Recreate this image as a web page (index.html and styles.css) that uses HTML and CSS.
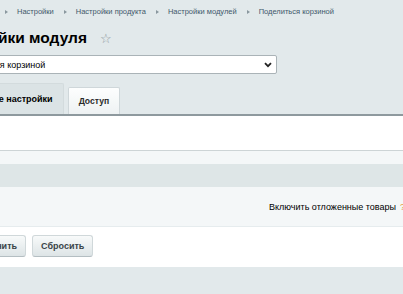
FILE: index.html
```html
<!DOCTYPE html>
<html lang="ru">
<head>
<meta charset="utf-8">
<link rel="stylesheet" href="styles.css">
</head>
<body>
<div class="page">
  <nav class="crumbs">
    <span class="sep"></span><a>Настройки</a>
    <span class="sep"></span><a>Настройки продукта</a>
    <span class="sep"></span><a>Настройки модулей</a>
    <span class="sep"></span><a>Поделиться корзиной</a>
  </nav>
  <h1 class="title"><span class="title-text">Настройки модуля</span><span class="star">☆</span></h1>
  <div class="select-row">
    <div class="select"><span>Поделиться корзиной</span>
      <svg class="chev" width="8" height="6" viewBox="0 0 8 6"><path d="M1 1.2 L4 4.2 L7 1.2" fill="none" stroke="#222" stroke-width="1.8"/></svg>
    </div>
  </div>
  <div class="tabs">
    <div class="tab active">Общие настройки</div>
    <div class="tab">Доступ</div>
  </div>
  <div class="panel">
    <div class="blank"></div>
    <div class="strip"></div>
    <div class="band"></div>
    <div class="row">
      <span class="label">Включить отложенные товары</span><span class="hint">?</span>
    </div>
    <div class="actions">
      <button class="btn">Применить</button>
      <button class="btn">Сбросить</button>
    </div>
  </div>
</div>
</body>
</html>
```
FILE: styles.css
```css
html, body {
  margin: 0;
  padding: 0;
}
body {
  background: #e2e9eb;
  font-family: "Liberation Sans", Arial, sans-serif;
  color: #000;
  overflow: hidden;
  width: 403px;
  height: 294px;
}
.page {
  display: flex;
  flex-direction: column;
}
.crumbs {
  display: flex;
  align-items: center;
  height: 11px;
  padding-top: 6px;
  padding-left: 3px;
  font-size: 7.5px;
  color: #41586a;
  white-space: nowrap;
}
.crumbs a {
  margin-right: 8px;
}
.sep {
  width: 0;
  height: 0;
  border-left: 3px solid #8a979e;
  border-top: 2.5px solid transparent;
  border-bottom: 2.5px solid transparent;
  margin: 0 9px 0 2px;
}
.title {
  margin: 11px 0 0 -57px;
  height: 20px;
  display: flex;
  align-items: center;
  font-size: 15.5px;
  font-weight: bold;
  white-space: nowrap;
  color: #000;
}
.star {
  margin-left: 13px;
  font-size: 13px;
  font-weight: normal;
  color: #8c979c;
}
.select-row {
  margin-top: 7px;
  margin-left: -50px;
}
.select {
  width: 317px;
  height: 17px;
  box-sizing: content-box;
  border: 1px solid #aab3b7;
  border-radius: 2px;
  background: #fff;
  display: flex;
  align-items: center;
  justify-content: space-between;
  padding: 0 4px 0 4px;
  font-size: 9px;
  white-space: nowrap;
}
.tabs {
  display: flex;
  align-items: flex-end;
  gap: 4px;
  margin-top: 10px;
  margin-left: -40px;
  height: 30px;
}
.tab {
  font-size: 8.6px;
  font-weight: bold;
  color: #2a2a2a;
  white-space: nowrap;
  height: 26px;
  display: flex;
  align-items: center;
  padding: 0 10px;
  background: linear-gradient(#fdfefe, #eef2f3);
  border: 1px solid #cfd7da;
  border-bottom: none;
  border-radius: 2px 2px 0 0;
}
.tab.active {
  font-size: 9px;
  height: 30px;
  padding: 0 10px 0 12px;
  background: #dbe3e5;
  border-color: #d3dbdd;
  color: #000;
}
.panel {
  border-top: 2px solid #8e999e;
}
.blank {
  height: 34px;
  background: #fff;
  border-bottom: 1px solid #cdd4d6;
}
.strip {
  height: 13px;
  background: #f4f7f8;
}
.band {
  height: 23px;
  background: #dee6e7;
}
.row {
  height: 40px;
  background: #f4f7f8;
  display: flex;
  align-items: center;
  justify-content: flex-end;
  margin-right: -3px;
  border-bottom: 1px solid #e6ecee;
  box-sizing: border-box;
  font-size: 9px;
  white-space: nowrap;
}
.hint {
  margin-left: 4px;
  color: #e5a03a;
  width: 6px;
}
.actions {
  height: 40px;
  background: #fff;
  display: flex;
  align-items: center;
  gap: 6px;
  margin-left: -42px;
  padding-bottom: 2px;
  box-sizing: border-box;
}
.btn {
  height: 22px;
  padding: 0 8px;
  font-family: "Liberation Sans", Arial, sans-serif;
  font-size: 9px;
  font-weight: bold;
  color: #3a4448;
  background: linear-gradient(#f8fafa, #dde4e6);
  border: 1px solid #d0d8da;
  border-bottom-color: #b4bec2;
  border-radius: 3px;
}
```
